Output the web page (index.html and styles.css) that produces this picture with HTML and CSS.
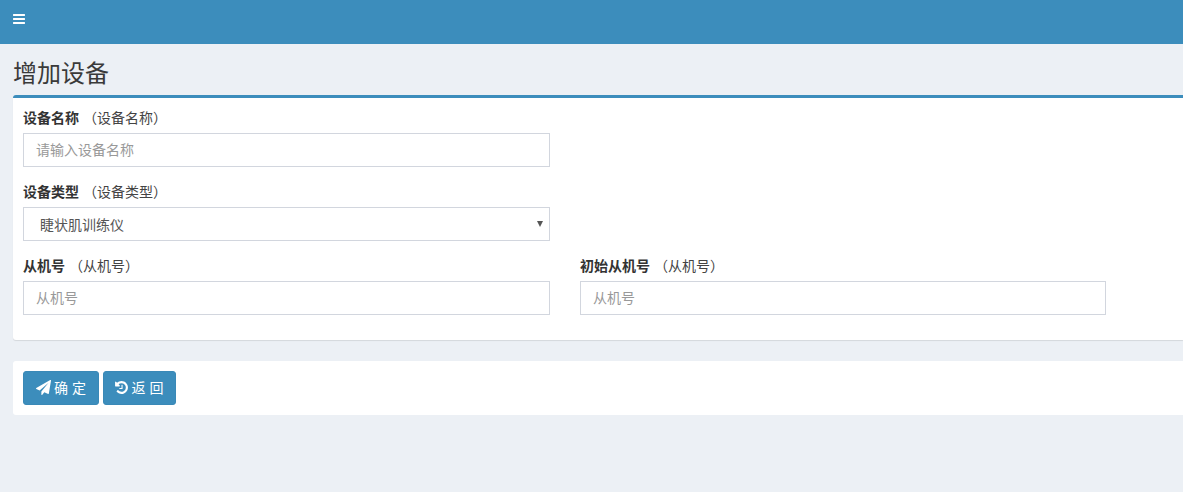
FILE: index.html
```html
<!DOCTYPE html>
<html lang="zh-CN">
<head>
<meta charset="utf-8">
<title>增加设备</title>
<link rel="stylesheet" href="styles.css">
</head>
<body>
<header class="topbar">
  <a class="toggle" href="#" aria-label="菜单">
    <svg class="icon-bars" viewBox="0 0 1536 1792"><path fill="currentColor" d="M1536 1344v128q0 26-19 45t-45 19H64q-26 0-45-19T0 1472v-128q0-26 19-45t45-19h1408q26 0 45 19t19 45zm0-512v128q0 26-19 45t-45 19H64q-26 0-45-19T0 960V832q0-26 19-45t45-19h1408q26 0 45 19t19 45zm0-512v128q0 26-19 45t-45 19H64q-26 0-45-19T0 448V320q0-26 19-45t45-19h1408q26 0 45 19t19 45z"/></svg>
  </a>
</header>
<main class="content">
  <h1 class="page-title">增加设备</h1>
  <form>
    <section class="box box-form">
      <div class="field half">
        <label class="label"><b>设备名称</b><span class="hint">（设备名称）</span></label>
        <input class="control" type="text" placeholder="请输入设备名称">
      </div>
      <div class="field half">
        <label class="label"><b>设备类型</b><span class="hint">（设备类型）</span></label>
        <div class="select-wrap"><select class="control select"><option>睫状肌训练仪</option></select></div>
      </div>
      <div class="row">
        <div class="field">
          <label class="label"><b>从机号</b><span class="hint">（从机号）</span></label>
          <input class="control" type="text" placeholder="从机号">
        </div>
        <div class="field">
          <label class="label"><b>初始从机号</b><span class="hint">（从机号）</span></label>
          <input class="control" type="text" placeholder="从机号">
        </div>
      </div>
    </section>
    <section class="box box-actions">
      <button class="btn btn-ok" type="button">
        <svg class="icon" viewBox="0 0 1792 1792"><path fill="currentColor" d="M1764 11q33 24 27 64l-256 1536q-5 29-32 45-14 8-31 8-11 0-24-5l-453-185-242 295q-18 23-49 23-13 0-22-4-19-7-30.5-23.5T640 1728v-349l864-1059-1069 925-395-162q-37-14-40-55-2-40 32-59L1696 9q16-9 32-9 19 0 36 11z"/></svg>确 定
      </button>
      <button class="btn btn-back" type="button">
        <svg class="icon icon-history" viewBox="0 0 1536 1792"><path fill="currentColor" d="M1536 896q0 156-61 298t-164 245-245 164-298 61q-172 0-327-72.5T177 1387q-7-10-6.5-22.5T179 1344l137-138q10-9 25-9 16 2 23 12 73 95 179 147t225 52q104 0 198.5-40.5T1130 1257t109.5-163.5T1280 896t-40.5-198.5T1130 534 966.5 424.5 768 384q-98 0-188 35.5T420 521l137 138q31 30 14 69-17 40-59 40H64q-26 0-45-19t-19-45V256q0-42 40-59 39-17 69 14l130 129Q346 236 483 182t285-54q156 0 298 61t245 164 164 245 61 298zM896 608v448q0 14-9 23t-23 9H544q-14 0-23-9t-9-23v-64q0-14 9-23t23-9h224V608q0-14 9-23t23-9h64q14 0 23 9t9 23z"/></svg>返 回
      </button>
    </section>
  </form>
</main>
</body>
</html>
```
FILE: styles.css
```css
* { box-sizing: border-box; }
html, body { height: 100%; }
body {
  margin: 0;
  background: #ecf0f5;
  color: #333;
  font-family: "Noto Sans CJK SC", "Liberation Sans", sans-serif;
  font-size: 14px;
  line-height: 20px;
  overflow: hidden;
}
.topbar {
  height: 44px;
  background: #3c8dbc;
  padding: 12px 13px 0;
}
.toggle { display: block; width: 12px; color: #fff; }
.icon-bars { display: block; width: 12px; height: 14px; }
.content { padding: 0 0 0 13px; }
.page-title {
  margin: 0;
  height: 51px;
  padding-top: 12px;
  font-size: 24px;
  line-height: 31px;
  font-weight: 400;
  color: #3a3a3a;
}
.box {
  background: #fff;
  border-radius: 3px 0 0 3px;
}
.box-form {
  height: 245px;
  border-top: 3px solid #3c8dbc;
  padding: 9px 10px 0;
  box-shadow: 0 1px 1px rgba(0, 0, 0, .1);
  margin-bottom: 21px;
}
.field { margin-bottom: 14px; }
.half { width: 527px; }
.row {
  display: grid;
  grid-template-columns: 527px 526px;
  column-gap: 30px;
}
.label {
  display: block;
  height: 26px;
  line-height: 20px;
  color: #333;
}
.label b { font-weight: 700; }
.hint { margin-left: 4px; color: #444; }
.control {
  display: block;
  width: 100%;
  height: 34px;
  padding: 5px 12px 7px;
  border: 1px solid #d2d6de;
  border-radius: 0;
  background: #fff;
  color: #555;
  font: inherit;
  outline: none;
}
.control::placeholder { color: #999; opacity: 1; }
.select-wrap { position: relative; }
.select-wrap::after {
  content: "";
  position: absolute;
  right: 7px;
  top: 14px;
  border-left: 3px solid transparent;
  border-right: 3px solid transparent;
  border-top: 6px solid #555;
  pointer-events: none;
}
.select { appearance: none; padding: 6px 12px 6px 16px; }
.box-actions {
  height: 54px;
  padding: 10px;
  display: flex;
  gap: 4px;
}
.btn {
  height: 34px;
  padding: 0 0 2px;
  display: flex;
  align-items: center;
  justify-content: center;
  gap: 3px;
  border: 1px solid #3a89b7;
  border-radius: 3px;
  background: #3c8dbc;
  color: #fff;
  font: inherit;
  word-spacing: 1px;
}
.btn-ok { width: 76px; }
.btn-back { width: 73px; }
.icon { width: 15px; height: 15px; flex: none; }
.icon-history { width: 13px; }
```
